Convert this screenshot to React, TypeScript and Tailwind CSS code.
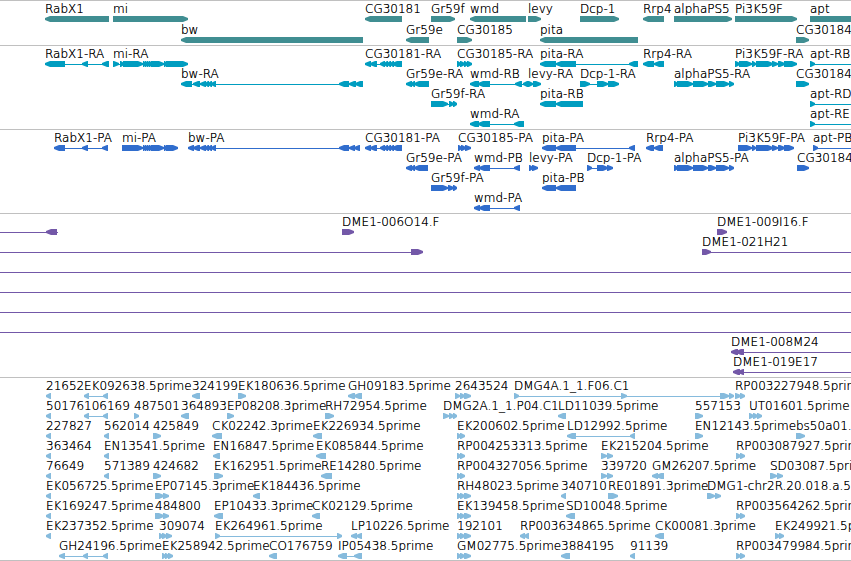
type Direction = "left" | "right";
type Exon = [start: number, end: number];

interface Feature {
  name: string;
  start: number;
  end: number;
  dir: Direction;
  exons: Exon[];
}

interface Track {
  title: string;
  color: string;
  rowClass: string;
  padClass: string;
  rows: Feature[][];
}

const EDGE = 4000;

function left(name: string, exons: Exon[], start = exons[0][0], end = exons[exons.length - 1][1]): Feature {
  return { name, start, end, dir: "left", exons };
}

function right(name: string, exons: Exon[], start = exons[0][0], end = exons[exons.length - 1][1]): Feature {
  return { name, start, end, dir: "right", exons };
}

function span(): Feature {
  return { name: "", start: 0, end: EDGE, dir: "right", exons: [] };
}

const MI_CORE: Exon[] = [[143, 146], [145, 148], [147, 150], [149, 152], [151, 164], [164, 167]];
const BW_CORE: Exon[] = [[193, 200], [200, 206], [205, 209], [208, 212], [211, 216], [339, 349]];
const CG30181: Exon[] = [[365, 371], [370, 377], [380, 385], [384, 388], [387, 391], [390, 394], [392, 402]];
const ALPHA: Exon[] = [[674, 678], [677, 693], [693, 708], [708, 716], [716, 729], [729, 734]];
const PI3K: Exon[] = [[739, 752], [752, 756], [756, 773], [772, 778], [778, 785]];
const SHARED_PAIR: Exon[] = [[457, 461], [460, 465]];
const SHARED_TRIPLE: Exon[] = [[457, 461], [460, 465], [464, 471]];
const RP_PAIR: Exon[] = [[736, 741], [740, 745]];

const tracks: Track[] = [
  {
    title: "Genes",
    color: "#408e92",
    rowClass: "relative h-[21px]",
    padClass: "pt-0.5",
    rows: [
      [
        left("RabX1", [[45, 109]]),
        right("mi", [[113, 188]]),
        left("CG30181", [[365, 402]]),
        right("Gr59f", [[431, 455]]),
        left("wmd", [[470, 526]]),
        right("levy", [[528, 541]]),
        right("Dcp-1", [[580, 619]]),
        left("Rrp4", [[643, 664]]),
        right("alphaPS5", [[674, 732]]),
        right("Pi3K59F", [[735, 797]]),
        right("apt", [[810, EDGE]]),
      ],
      [
        left("bw", [[181, 363]]),
        left("Gr59e", [[406, 429]]),
        right("CG30185", [[457, 472]]),
        left("pita", [[540, 638]]),
        right("CG30184", [[796, 809]]),
      ],
    ],
  },
  {
    title: "Transcripts",
    color: "#009dc0",
    rowClass: "relative h-5",
    padClass: "pt-0.5 pb-px",
    rows: [
      [
        left("RabX1-RA", [[45, 65], [82, 88], [102, 109]]),
        right("mi-RA", [[113, 119], [120, 124], [123, 143], ...MI_CORE, [166, 188]]),
        left("CG30181-RA", CG30181),
        right("CG30185-RA", [[457, 461], [460, 465], [464, 468], [467, 472]]),
        left("pita-RA", [[540, 556], [556, 576], [629, 638]]),
        left("Rrp4-RA", [[643, 654], [654, 664]]),
        right("Pi3K59F-RA", [[735, 740], ...PI3K, [784, 797]]),
        right("apt-RB", [[810, 815]], 810, EDGE),
      ],
      [
        left("bw-RA", [[181, 192], ...BW_CORE, [349, 356], [355, 363]]),
        left("Gr59e-RA", [[406, 412], [411, 415], [414, 429]]),
        left("wmd-RB", [[470, 479], [478, 490], [515, 522], [523, 528]]),
        right("levy-RA", [[528, 533], [533, 541]]),
        right("Dcp-1-RA", [[580, 590], [597, 608], [608, 619]]),
        right("alphaPS5-RA", ALPHA),
        right("CG30184-RA", [[796, 809]]),
      ],
      [
        right("Gr59f-RA", [[431, 448], [449, 454], [453, 457]]),
        left("pita-RB", [[540, 556], [556, 583]]),
        right("apt-RD", [[810, 815]], 810, EDGE),
      ],
      [
        left("wmd-RA", [[470, 479], [478, 490], [514, 524]]),
        right("apt-RE", [[810, 815]], 810, EDGE),
      ],
    ],
  },
  {
    title: "Proteins",
    color: "#306dcd",
    rowClass: "relative h-5",
    padClass: "pt-0.5 pb-px",
    rows: [
      [
        left("RabX1-PA", [[54, 65], [82, 88], [102, 108]]),
        right("mi-PA", [[122, 143], ...MI_CORE, [166, 178]]),
        left("bw-PA", [[188, 194], ...BW_CORE, [349, 355], [354, 360]]),
        left("CG30181-PA", CG30181),
        right("CG30185-PA", [[458, 462], [461, 466], [465, 471]]),
        left("pita-PA", [[542, 556], [556, 576], [629, 635]]),
        left("Rrp4-PA", [[646, 654], [654, 663]]),
        right("Pi3K59F-PA", [[738, 742], ...PI3K, [784, 794]]),
        right("apt-PB", [[813, 818]], 813, EDGE),
      ],
      [
        left("Gr59e-PA", [[406, 412], [411, 415], [414, 428]]),
        left("wmd-PB", [[474, 480], [479, 490], [514, 520]]),
        right("levy-PA", [[529, 533], [532, 538]]),
        right("Dcp-1-PA", [[587, 592], [597, 608], [607, 613]]),
        right("alphaPS5-PA", ALPHA),
        right("CG30184-PA", [[797, 809]]),
      ],
      [
        right("Gr59f-PA", [[431, 448], [448, 454], [453, 457]]),
        left("pita-PB", [[542, 556], [556, 576]]),
      ],
      [left("wmd-PA", [[474, 480], [479, 490], [514, 520]])],
    ],
  },
  {
    title: "BAC clones",
    color: "#7358a8",
    rowClass: "relative h-5",
    padClass: "pt-0.5 pb-px",
    rows: [
      [
        left("", [[46, 57]], 0, 58),
        right("DME1-006O14.F", [[342, 354]]),
        right("DME1-009I16.F", [[717, 727]]),
      ],
      [right("", [[411, 423]], 0, 423), right("DME1-021H21", [[702, 711]], 702, EDGE)],
      [span()],
      [span()],
      [span()],
      [span()],
      [left("DME1-008M24", [[731, 738], [736, 744]], 731, EDGE)],
      [left("DME1-019E17", [[733, 740], [738, 744]], 733, EDGE)],
    ],
  },
  {
    title: "ESTs",
    color: "#86bbdd",
    rowClass: "relative h-5",
    padClass: "pt-0.5",
    rows: [
      [
        left("21652", [[46, 51]]),
        left("EK092638.5prime", [[84, 89], [103, 108]]),
        left("324199", [[192, 200]]),
        right("EK180636.5prime", [[238, 246]]),
        left("GH09183.5prime", [[348, 355], [354, 362]]),
        right("2643524", [[455, 460], [460, 465], [464, 471]]),
        right("DMG4A.1_1.F06.C1", [[514, 519], [621, 627], [720, 729], [729, 734]]),
        right("RP003227948.5prime", [[735, 741], [740, 745]]),
      ],
      [
        left("50176", [[46, 51]]),
        left("106169", [[84, 89], [103, 108]]),
        right("487501", [[134, 139]]),
        left("364893", [[181, 189]]),
        right("EP08208.3prime", [[227, 234]]),
        right("RH72954.5prime", [[325, 334]]),
        right("DMG2A.1_1.P04.C1", [[443, 449], [449, 454], [453, 457]]),
        left("LD11039.5prime", [[558, 566]]),
        right("557153", [[695, 703]]),
        right("UT01601.5prime", [[749, 754], [753, 758], [757, 762]]),
      ],
      [
        left("227827", [[46, 51]]),
        left("562014", [[104, 109]]),
        right("425849", [[153, 161]]),
        left("CK02242.3prime", [[212, 222]]),
        left("EK226934.5prime", [[313, 322]]),
        right("EK200602.5prime", SHARED_PAIR),
        left("LD12992.5prime", [[567, 576], [630, 635]]),
        right("EN12143.5prime", [[695, 703]]),
        right("bs50a01.y1", [[796, 805]]),
      ],
      [
        left("363464", [[46, 51]]),
        left("EN13541.5prime", [[104, 109]]),
        left("EN16847.5prime", [[213, 220]]),
        left("EK085844.5prime", [[316, 326]]),
        right("RP004253313.5prime", SHARED_PAIR),
        right("EK215204.5prime", [[601, 607], [607, 613]]),
        right("RP003087927.5prime", RP_PAIR),
      ],
      [
        left("76649", [[46, 51]]),
        left("571389", [[104, 109]]),
        right("424682", [[153, 161]]),
        right("EK162951.5prime", [[214, 223]]),
        left("RE14280.5prime", [[321, 332]]),
        right("RP004327056.5prime", SHARED_PAIR),
        right("339720", [[601, 607], [607, 613]]),
        left("GM26207.5prime", [[652, 658], [656, 664]]),
        right("SD03087.5prime", [[770, 777], [777, 783]]),
      ],
      [
        left("EK056725.5prime", [[46, 51]]),
        right("EP07145.3prime", [[155, 164], [163, 169]]),
        left("EK184436.5prime", [[253, 260]]),
        right("RH48023.5prime", SHARED_TRIPLE),
        left("340710", [[561, 566]]),
        right("RE01891.3prime", [[608, 618]]),
        right("DMG1-chr2R.20.018.a.5", [[707, 715], [715, 721]]),
      ],
      [
        left("EK169247.5prime", [[46, 51]]),
        right("484800", [[155, 164], [163, 169]]),
        left("EP10433.3prime", [[214, 223]]),
        left("CK02129.5prime", [[312, 320]]),
        right("EK139458.5prime", SHARED_TRIPLE),
        left("SD10048.5prime", [[566, 575]]),
        right("RP003564262.5prime", RP_PAIR),
      ],
      [
        left("EK237352.5prime", [[46, 51]]),
        right("309074", [[159, 163], [162, 167], [166, 172]]),
        right("EK264961.5prime", [[215, 220], [337, 342]]),
        left("LP10226.5prime", [[351, 357], [356, 362]]),
        right("192101", SHARED_TRIPLE),
        left("RP003634865.5prime", [[520, 525], [524, 529]]),
        left("CK00081.3prime", [[655, 664]]),
        right("EK249921.5prime", [[775, 780], [779, 784]]),
      ],
      [
        left("GH24196.5prime", [[59, 65], [83, 88], [103, 108]]),
        right("EK258942.5prime", [[162, 166], [165, 169], [168, 173]]),
        left("CO176759", [[269, 277]]),
        left("IP05438.5prime", [[338, 347], [354, 362]]),
        right("GM02775.5prime", SHARED_TRIPLE),
        left("3884195", [[561, 570]]),
        left("91139", [[630, 635]]),
        right("RP003479984.5prime", RP_PAIR),
      ],
    ],
  },
];

function exonPoints([start, end]: Exon, dir: Direction): string {
  const tip = Math.min(5, end - start - 1);
  return dir === "left"
    ? `${start},15 ${start + tip},13 ${end},13 ${end},19 ${start + tip},19 ${start},17`
    : `${end},15 ${end - tip},13 ${start},13 ${start},19 ${end - tip},19 ${end},17`;
}

function Glyph({ feature }: { feature: Feature }) {
  const { start, end, dir, exons } = feature;
  return (
    <g>
      <rect x={start} y="16" width={end - start} height="1" shapeRendering="crispEdges" />
      {exons.map((exon) => (
        <polygon key={exon[0]} points={exonPoints(exon, dir)} />
      ))}
    </g>
  );
}

function TrackRow({ features, track }: { features: Feature[]; track: Track }) {
  return (
    <div className={track.rowClass}>
      <svg className="block h-full w-full" fill={track.color} aria-hidden="true">
        {features.map((feature, i) => (
          <Glyph key={i} feature={feature} />
        ))}
      </svg>
      {features
        .filter((feature) => feature.name)
        .map((feature) => (
          <span
            key={feature.name}
            className="absolute -top-px whitespace-nowrap leading-[14px]"
            style={{ left: feature.start }}
          >
            {feature.name}
          </span>
        ))}
    </div>
  );
}

export default function App() {
  return (
    <main className="w-full overflow-hidden border-b border-[#c0c0c0] bg-white font-['DejaVu_Sans',sans-serif] text-xs font-extralight text-black [text-shadow:0_0_0_#000]">
      {tracks.map((track) => (
        <section
          key={track.title}
          aria-label={track.title}
          className={`border-t border-[#c0c0c0] ${track.padClass}`}
        >
          {track.rows.map((features, i) => (
            <TrackRow key={i} features={features} track={track} />
          ))}
        </section>
      ))}
    </main>
  );
}
